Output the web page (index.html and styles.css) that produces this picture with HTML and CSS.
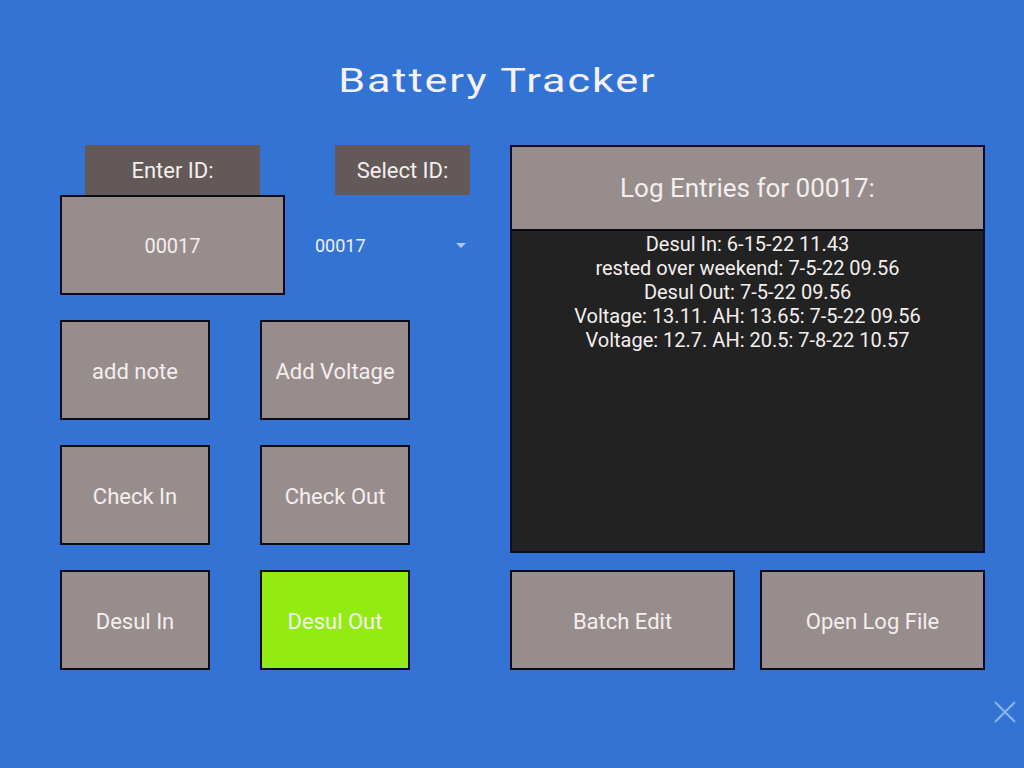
FILE: index.html
```html
<!DOCTYPE html>
<html>
<head>
<meta charset="utf-8">
<link rel="stylesheet" href="styles.css">
</head>
<body>
<div class="screen">
  <div class="title-bar"><h1 class="title">Battery Tracker</h1></div>
  <div class="main">
    <div class="left">
      <div class="labels">
        <div class="label label-enter">Enter ID:</div>
        <div class="label label-select">Select ID:</div>
      </div>
      <div class="id-row">
        <div class="id-input">00017</div>
        <div class="dropdown">
          <span class="dd-text">00017</span>
          <span class="dd-arrow"></span>
        </div>
      </div>
      <div class="buttons">
        <div class="btn">add note</div>
        <div class="btn">Add Voltage</div>
        <div class="btn">Check In</div>
        <div class="btn">Check Out</div>
        <div class="btn">Desul In</div>
        <div class="btn btn-green">Desul Out</div>
      </div>
    </div>
    <div class="right">
      <div class="log">
        <div class="log-head">Log Entries for 00017:</div>
        <div class="log-body">
          <div>Desul In: 6-15-22 11.43</div>
          <div>rested over weekend: 7-5-22 09.56</div>
          <div>Desul Out: 7-5-22 09.56</div>
          <div>Voltage: 13.11. AH: 13.65: 7-5-22 09.56</div>
          <div>Voltage: 12.7. AH: 20.5: 7-8-22 10.57</div>
        </div>
      </div>
      <div class="log-buttons">
        <div class="btn btn-wide">Batch Edit</div>
        <div class="btn btn-wide">Open Log File</div>
      </div>
    </div>
  </div>
  <div class="close">
    <svg width="22" height="22" viewBox="0 0 22 22"><path d="M1 1 L21 21 M21 1 L1 21" stroke="#8fb4ec" stroke-width="2" fill="none"/></svg>
  </div>
</div>
</body>
</html>
```
FILE: styles.css
```css
html, body {
  margin: 0;
  padding: 0;
}
body {
  background: #3373d4;
  font-family: Roboto, "Noto Sans", sans-serif;
  color: #f4eeee;
}
.screen {
  width: 1024px;
  height: 768px;
  position: relative;
  overflow: hidden;
}
.title-bar {
  height: 89px;
  padding-top: 60px;
  box-sizing: border-box;
  display: flex;
  justify-content: center;
  padding-right: 30px;
}
.title {
  margin: 0;
  font-family: Roboto, sans-serif;
  font-weight: normal;
  font-size: 34px;
  line-height: 40px;
  height: 29px;
  letter-spacing: 1.5px;
  transform: scaleX(1.27);
  color: #f4f2f8;
  white-space: nowrap;
}
.main {
  display: flex;
  padding: 56px 0 0 60px;
  gap: 40px;
}
.left {
  width: 410px;
  display: flex;
  flex-direction: column;
}
.labels {
  display: flex;
  height: 50px;
}
.label {
  background: #635958;
  display: flex;
  align-items: center;
  justify-content: center;
  font-size: 22px;
  padding-top: 1px;
  box-sizing: border-box;
}
.label-enter {
  margin-left: 25px;
  width: 175px;
}
.label-select {
  margin-left: 75px;
  width: 135px;
}
.id-row {
  display: flex;
  height: 100px;
}
.id-input {
  width: 225px;
  box-sizing: border-box;
  border: 2px solid #0a0a14;
  background: #978d8c;
  display: flex;
  align-items: center;
  justify-content: center;
  font-size: 20px;
  padding-top: 2px;
}
.dropdown {
  flex: 1;
  display: flex;
  align-items: center;
  padding: 0 4px 0 30px;
  font-size: 18px;
}
.dd-text {
  flex: 1;
}
.dd-arrow {
  width: 0;
  height: 0;
  border-left: 5px solid transparent;
  border-right: 5px solid transparent;
  border-top: 5px solid #b5c6e6;
}
.buttons {
  margin-top: 25px;
  display: grid;
  grid-template-columns: 150px 150px;
  grid-auto-rows: 100px;
  column-gap: 50px;
  row-gap: 25px;
}
.btn {
  box-sizing: border-box;
  border: 2px solid #0a0a14;
  background: #978d8c;
  display: flex;
  align-items: center;
  justify-content: center;
  font-size: 22px;
  padding-top: 2px;
}
.btn-green {
  background: #92ec14;
}
.right {
  width: 475px;
  display: flex;
  flex-direction: column;
}
.log {
  height: 408px;
  box-sizing: border-box;
  border: 2px solid #0a0a2a;
  display: flex;
  flex-direction: column;
}
.log-head {
  height: 82px;
  flex: none;
  background: #978d8c;
  border-bottom: 2px solid #0a0a14;
  display: flex;
  align-items: center;
  justify-content: center;
  font-size: 26px;
}
.log-body {
  flex: 1;
  background: #222222;
  text-align: center;
  font-size: 20px;
  line-height: 24px;
  padding-top: 1px;
}
.log-buttons {
  margin-top: 17px;
  display: grid;
  grid-template-columns: 225px 225px;
  column-gap: 25px;
}
.btn-wide {
  height: 100px;
}
.close {
  position: absolute;
  left: 994px;
  top: 701px;
  width: 22px;
  height: 22px;
}
.close svg {
  display: block;
}
```
